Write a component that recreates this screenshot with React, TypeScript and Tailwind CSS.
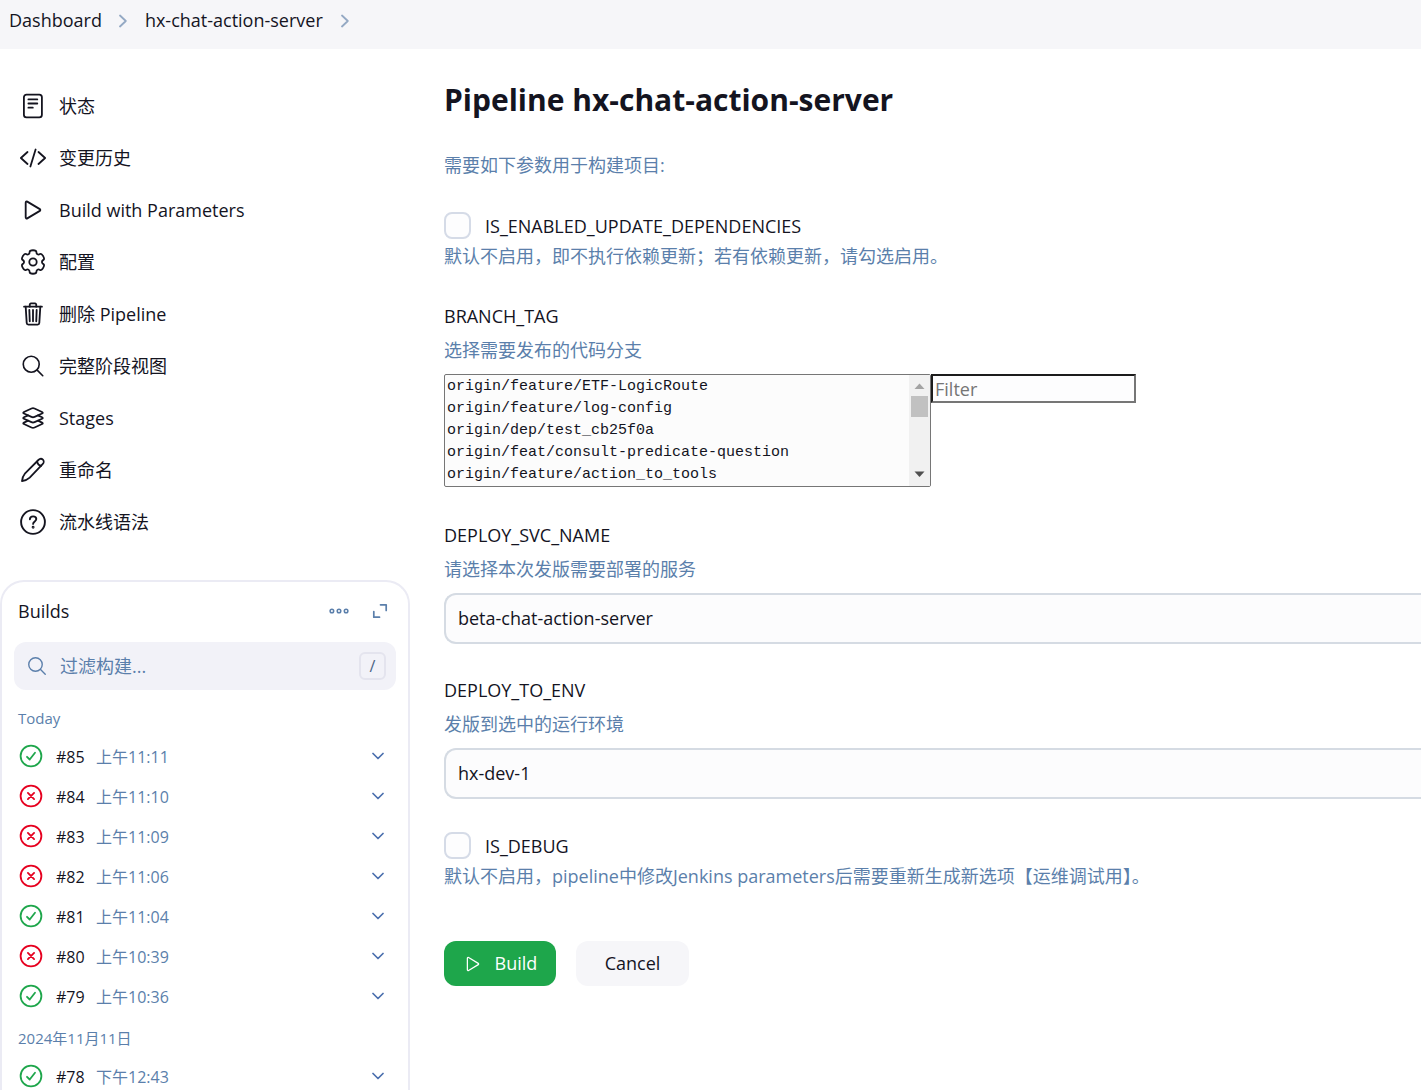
import React from "react";
import {
  IoLayersOutline,
  IoPlayOutline,
  IoSearchOutline,
  IoTrashOutline,
} from "react-icons/io5";

const BODY_FONT = "font-['Open_Sans','Noto_Sans_CJK_SC',sans-serif]";

function DocumentIcon() {
  return (
    <svg viewBox="0 0 26 26" className="size-[26px]" fill="none" stroke="currentColor" strokeWidth="1.8" strokeLinecap="round" strokeLinejoin="round" aria-hidden="true">
      <rect x="3.900" y="1.700" width="18" height="22.700" rx="2.6" />
      <path d="M8.4 6.400h8.900M8.4 10.500h8.900M8.4 14.700h4.4" />
    </svg>
  );
}

function CodeIcon() {
  return (
    <svg viewBox="0 0 26 26" className="size-[26px]" fill="none" stroke="currentColor" strokeWidth="1.800" strokeLinecap="round" strokeLinejoin="round" aria-hidden="true">
      <path d="M7.500 7 .9 13l6.600 6M18.500 7l6.600 6-6.600 6M15.600 4.500l-5.200 17" />
    </svg>
  );
}

// Closed quadratic spline through the midpoints of six lobes' control points.
const gearPath = (() => {
  const points: [number, number][] = [];
  for (let lobe = 0; lobe < 6; lobe += 1) {
    for (const [offset, radius] of [[-16, 12.2], [16, 12.2], [22, 9], [38, 9]]) {
      const angle = ((lobe * 60 + offset) * Math.PI) / 180;
      points.push([13 + radius * Math.sin(angle), 13 - radius * Math.cos(angle)]);
    }
  }
  const middle = (a: [number, number], b: [number, number]) =>
    `${((a[0] + b[0]) / 2).toFixed(2)} ${((a[1] + b[1]) / 2).toFixed(2)}`;
  const last = points[points.length - 1];
  const curves = points.map((point, i) => {
    const next = points[(i + 1) % points.length];
    return `Q${point[0].toFixed(2)} ${point[1].toFixed(2)} ${middle(point, next)}`;
  });
  return `M${middle(last, points[0])}${curves.join("")}Z`;
})();

function GearIcon() {
  return (
    <svg viewBox="0 0 26 26" className="size-[26px]" fill="none" stroke="currentColor" strokeWidth="1.800" strokeLinejoin="round" aria-hidden="true">
      <path d={gearPath} />
      <circle cx="13" cy="13" r="3.700" />
    </svg>
  );
}

function PencilIcon() {
  return (
    <svg viewBox="0 0 26 26" className="size-[26px]" fill="none" stroke="currentColor" strokeWidth="1.8" strokeLinecap="round" strokeLinejoin="round" aria-hidden="true">
      <path d="M2 24.200c.3-3 1.300-5.700 3.100-7.900L18.400 3c1.300-1.300 3.300-1.500 4.500-.3s1 3.200-.3 4.500L9.700 20.700C7.500 22.700 5 23.800 2 24.200Z" />
      <path d="M17 4.700c.6 2.300 1.900 3.700 4.200 4.200" />
    </svg>
  );
}

function HelpIcon() {
  return (
    <svg viewBox="0 0 26 26" className="size-[26px]" fill="none" stroke="currentColor" strokeWidth="1.9" strokeLinecap="round" strokeLinejoin="round" aria-hidden="true">
      <circle cx="13" cy="13" r="11.900" />
      <path d="M9.900 10.200c.1-1.700 1.400-2.800 3.200-2.800s3.200 1.100 3.200 2.700c0 2.400-3.200 2.300-3.200 4.800" />
      <circle cx="13.100" cy="18.300" r=".5" fill="currentColor" />
    </svg>
  );
}

function ChevronRight() {
  return (
    <svg viewBox="0 0 8 14" className="h-[14px] w-2" fill="none" stroke="#94a9c4" strokeWidth="1.8" strokeLinecap="round" strokeLinejoin="round" aria-hidden="true">
      <path d="M1 1.500 6.800 7 1 12.500" />
    </svg>
  );
}

function StatusIcon({ ok }: { ok: boolean }) {
  return (
    <svg viewBox="0 0 24 24" className={ok ? "size-6 text-[#1ea64b]" : "size-6 text-[#e6001f]"} fill="none" stroke="currentColor" strokeWidth="1.800" strokeLinecap="round" strokeLinejoin="round" role="img" aria-label={ok ? "Success" : "Failed"}>
      <circle cx="12" cy="12" r="10.400" />
      {ok ? <path d="m8 12.800 2.700 2.700L16 8.800" /> : <path d="m8.900 8.900 6.200 6.200m0-6.200-6.200 6.200" />}
    </svg>
  );
}

const navItems = [
  { label: "状态", icon: <DocumentIcon /> },
  { label: "变更历史", icon: <CodeIcon /> },
  { label: "Build with Parameters", icon: <IoPlayOutline className="size-[26px] [&_*]:[stroke-width:36px]" /> },
  { label: "配置", icon: <GearIcon /> },
  { label: "删除 Pipeline", icon: <IoTrashOutline className="size-[26px] [&_*]:[stroke-width:36px]" /> },
  { label: "完整阶段视图", icon: <IoSearchOutline className="size-[26px]" /> },
  { label: "Stages", icon: <IoLayersOutline className="size-[26px] [&_*]:[stroke-width:36px]" /> },
  { label: "重命名", icon: <PencilIcon /> },
  { label: "流水线语法", icon: <HelpIcon /> },
];

const buildGroups = [
  {
    day: "Today",
    builds: [
      { id: "#85", time: "上午11:11", ok: true },
      { id: "#84", time: "上午11:10", ok: false },
      { id: "#83", time: "上午11:09", ok: false },
      { id: "#82", time: "上午11:06", ok: false },
      { id: "#81", time: "上午11:04", ok: true },
      { id: "#80", time: "上午10:39", ok: false },
      { id: "#79", time: "上午10:36", ok: true },
    ],
  },
  { day: "2024年11月11日", builds: [{ id: "#78", time: "下午12:43", ok: true }] },
];

const branches = [
  "origin/feature/ETF-LogicRoute",
  "origin/feature/log-config",
  "origin/dep/test_cb25f0a",
  "origin/feat/consult-predicate-question",
  "origin/feature/action_to_tools",
];

function Builds() {
  return (
    <section className="mt-8 shrink-0 rounded-t-3xl border-2 border-b-0 border-[#ebebf4] px-3 pb-4" aria-label="Builds">
      <header className="flex h-[58px] items-center pr-2 pl-1">
        <h2 className="flex-1 leading-6">Builds</h2>
        <button type="button" aria-label="More actions" className="mr-[22px] text-[#5b7fab]">
          <svg viewBox="0 0 22 8" className="h-2 w-[22px]" fill="none" stroke="currentColor" strokeWidth="1.500">
            <circle cx="3.900" cy="4" r="1.800" />
            <circle cx="11" cy="4" r="1.800" />
            <circle cx="18.100" cy="4" r="1.800" />
          </svg>
        </button>
        <button type="button" aria-label="Expand" className="text-[#5b7fab]">
          <svg viewBox="0 0 16 16" className="size-4" fill="none" stroke="currentColor" strokeWidth="1.700" strokeLinecap="round" strokeLinejoin="round">
            <path d="M8.500 1.800h5.700v5.700M1.800 8.500v5.700h5.700" />
          </svg>
        </button>
      </header>
      <label className="mt-[2px] flex h-12 items-center rounded-xl bg-[#f2f2f8] pr-[10px] pl-3 text-[#5b7fab]">
        <IoSearchOutline className="mr-3 size-[22px] shrink-0" />
        <input type="text" aria-label="过滤构建" placeholder="过滤构建..." className="min-w-0 flex-1 bg-transparent outline-none placeholder:text-[#5b7fab]" />
        <kbd className={`flex h-7 w-[27px] items-center justify-center rounded-md border-2 border-[#e4e4ee] text-base text-[#4a6484] ${BODY_FONT}`}>/</kbd>
      </label>
      <div className="mt-[6px]">
        {buildGroups.map((group) => (
          <div key={group.day}>
            <h3 className="flex h-10 items-center pt-1 pl-1 text-[15px] text-[#5b7fab]">{group.day}</h3>
            <ul>
              {group.builds.map((build) => (
                <li key={build.id} className="flex h-10 items-center pr-3 pl-[5px]">
                  <StatusIcon ok={build.ok} />
                  <a href="#build" className="ml-[13px] w-[40px] pt-[2px] text-base">{build.id}</a>
                  <span className="flex-1 pt-[2px] text-base text-[#5b7fab]">{build.time}</span>
                  <button type="button" aria-label={`${build.id} menu`} className="text-[#4a6fae]">
                    <svg viewBox="0 0 12 8" className="h-2 w-3" fill="none" stroke="currentColor" strokeWidth="1.700" strokeLinecap="round" strokeLinejoin="round">
                      <path d="m1 1.500 5 5 5-5" />
                    </svg>
                  </button>
                </li>
              ))}
            </ul>
          </div>
        ))}
      </div>
    </section>
  );
}

function CheckField({ id, label, description }: { id: string; label: string; description: string }) {
  return (
    <>
      <div className="flex items-center">
        <input id={id} type="checkbox" className="size-[27px] appearance-none rounded-lg border-2 border-[#d5dbe7] bg-[#fdfdfe] checked:bg-[#1ea64b]" />
        <label htmlFor={id} className="pl-[14px] leading-6">{label}</label>
      </div>
      <p className="mt-[5px] leading-6 text-[#5b7fab]">{description}</p>
    </>
  );
}

function SelectField({ id, label, description, value }: { id: string; label: string; description: string; value: string }) {
  return (
    <>
      <label htmlFor={id} className="block leading-6">{label}</label>
      <p className="mt-[10px] leading-6 text-[#5b7fab]">{description}</p>
      <select id={id} defaultValue={value} className="mt-3 block h-[51px] w-full appearance-none rounded-l-xl border-2 border-r-0 border-[#d5dbe3] bg-[#fcfcfd] px-3">
        <option>{value}</option>
      </select>
    </>
  );
}

export default function App() {
  return (
    <div className={`flex h-screen flex-col overflow-hidden bg-white text-[18px] text-[#14141f] ${BODY_FONT}`}>
      <nav aria-label="Breadcrumb" className="flex h-[49px] shrink-0 items-center bg-[#f6f6f9] pb-2 pl-[9px]">
        <a href="#dashboard" className="mr-[17px]">Dashboard</a>
        <ChevronRight />
        <a href="#job" className="mr-[18px] ml-[18px]">hx-chat-action-server</a>
        <ChevronRight />
      </nav>
      <div className="flex min-h-0 flex-1">
        <aside className="flex w-[410px] shrink-0 flex-col overflow-hidden pt-[31px]">
          <nav aria-label="Tasks" className="shrink-0">
            {navItems.map((item) => (
              <a key={item.label} href="#task" className="flex h-[52px] items-center gap-[13px] pl-5">
                {item.icon}
                <span>{item.label}</span>
              </a>
            ))}
          </nav>
          <Builds />
        </aside>
        <main className="min-w-0 flex-1 overflow-hidden pt-[31px] pl-[34px]">
          <h1 className="text-[30px] leading-10 font-bold">Pipeline hx-chat-action-server</h1>
          <form onSubmit={(event) => event.preventDefault()}>
            <p className="mt-[33px] leading-6 text-[#5b7fab]">需要如下参数用于构建项目:</p>
            <div className="mt-[35px]">
              <CheckField id="update" label="IS_ENABLED_UPDATE_DEPENDENCIES" description="默认不启用，即不执行依赖更新；若有依赖更新，请勾选启用。" />
            </div>
            <div className="mt-9">
              <label htmlFor="branch" className="block leading-6">BRANCH_TAG</label>
              <p className="mt-[10px] leading-6 text-[#5b7fab]">选择需要发布的代码分支</p>
              <div className="mt-3 flex items-start">
                <div className="relative w-[487px]">
                  <select id="branch" multiple size={5} className="block h-[113px] w-full overflow-hidden rounded-xs border border-[#767676] bg-[#fcfcfc] pt-[3px] font-['Liberation_Mono',monospace] text-[15px] [scrollbar-width:none]">
                    {branches.map((branch) => (
                      <option key={branch} className="h-[22px] min-h-[22px] px-[2px] py-0 leading-[22px]">{branch}</option>
                    ))}
                  </select>
                  <div aria-hidden="true" className="absolute inset-y-px right-px flex w-[21px] flex-col items-center bg-[#f1f1f1]">
                    <svg viewBox="0 0 21 21" className="size-[21px]"><path d="M5.500 14h10l-5-5.500Z" fill="#a3a3a3" /></svg>
                    <div className="h-[21px] w-[17px] bg-[#c1c1c1]" />
                    <svg viewBox="0 0 21 21" className="mt-auto size-[21px]"><path d="M5.500 6.500h10l-5 5.500Z" fill="#505050" /></svg>
                  </div>
                </div>
                <input type="text" aria-label="Filter" placeholder="Filter" className="h-[29px] w-[205px] border-2 border-t-[#1c1c1c] border-r-[#767676] border-b-[#767676] border-l-[#1c1c1c] bg-[#fdfdfe] px-[2px] placeholder:text-[#757575]" />
              </div>
            </div>
            <div className="mt-9">
              <SelectField id="svc" label="DEPLOY_SVC_NAME" description="请选择本次发版需要部署的服务" value="beta-chat-action-server" />
            </div>
            <div className="mt-[34px]">
              <SelectField id="env" label="DEPLOY_TO_ENV" description="发版到选中的运行环境" value="hx-dev-1" />
            </div>
            <div className="mt-[33px]">
              <CheckField id="debug" label="IS_DEBUG" description="默认不启用，pipeline中修改Jenkins parameters后需要重新生成新选项【运维调试用】。" />
            </div>
            <div className="mt-[53px] flex gap-5">
              <button type="submit" className="flex h-[45px] w-28 items-center justify-center gap-3 rounded-xl bg-[#1ea64b] font-medium text-white">
                <IoPlayOutline className="size-5" />
                Build
              </button>
              <button type="button" className="h-[45px] w-[113px] rounded-xl bg-[#f6f6f9]">Cancel</button>
            </div>
          </form>
        </main>
      </div>
    </div>
  );
}
